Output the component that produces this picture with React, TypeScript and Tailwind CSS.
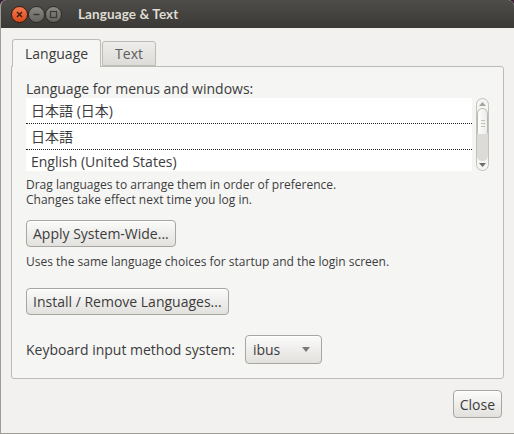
import { useState } from "react";

const font = { fontFamily: '"Open Sans", "Noto Sans CJK JP", sans-serif' };

const langs = ["日本語 (日本)", "日本語", "English (United States)"];

const WinButton = ({ kind }: { kind: "close" | "min" | "max" }) => {
  const isClose = kind === "close";
  return (
    <div
      className={
        "w-[17px] h-[17px] rounded-full flex items-center justify-center border " +
        (isClose
          ? "bg-gradient-to-b from-[#f47a4f] to-[#d84a17] border-[#3a1a10]"
          : "bg-gradient-to-b from-[#8a8883] to-[#66645f] border-[#2e2d2a]")
      }
    >
      <svg width="9" height="9" viewBox="0 0 9 9">
        {kind === "close" && (
          <path d="M2 2 L7 7 M7 2 L2 7" stroke="#3b1a0e" strokeWidth="1.4" />
        )}
        {kind === "min" && <path d="M1.5 4.5 H7.5" stroke="#3a3935" strokeWidth="1.4" />}
        {kind === "max" && (
          <rect x="1.5" y="1.5" width="6" height="6" fill="none" stroke="#3a3935" strokeWidth="1.2" />
        )}
      </svg>
    </div>
  );
};

const GtkButton = ({ children, className = "" }: { children: React.ReactNode; className?: string }) => (
  <div
    className={
      "h-[27px] flex items-center px-[6px] rounded-[4px] border border-[#a8a6a0] bg-gradient-to-b from-[#fbfbfa] to-[#e2e1de] text-[14px] text-[#3c3c3c] shadow-[inset_0_1px_0_#fff] " +
      className
    }
  >
    {children}
  </div>
);

export default function App() {
  const [tab, setTab] = useState("Language");
  return (
    <div
      style={font}
      className="w-[514px] h-[434px] bg-[#3c1d33] overflow-hidden text-[#3c3c3c]"
    >
      <div className="w-full h-full rounded-t-[6px] overflow-hidden flex flex-col bg-[#f2f1f0] border-l border-b border-[#9e9c97]">
        {/* title bar */}
        <div className="h-[28px] shrink-0 flex items-center bg-gradient-to-b from-[#4e4d49] to-[#3a3935] pl-[10px]">
          <div className="flex items-center">
            <WinButton kind="close" />
            <WinButton kind="min" />
            <WinButton kind="max" />
          </div>
          <span className="ml-[16px] font-['Lato',sans-serif] text-[13.5px] font-bold text-[#dfdbd2] tracking-[0.1px]">
            Language &amp; Text
          </span>
        </div>

        <div className="flex-1 flex flex-col px-[10px] pt-[10px]">
          {/* tabs */}
          <div className="flex items-end h-[28px] pl-[1px]">
            {["Language", "Text"].map((t) => {
              const active = t === tab;
              return (
                <div
                  key={t}
                  onClick={() => setTab(t)}
                  className={
                    "border border-[#bdbbb6] rounded-t-[3px] px-[12px] text-[14px] flex items-center cursor-default " +
                    (active
                      ? "h-[28px] bg-[#f6f6f5] border-b-0 relative top-[1px] z-10 text-[#3c3c3c]"
                      : "h-[25px] ml-[1px] bg-gradient-to-b from-[#eeedeb] to-[#dddcd9] text-[#5d5d5d]")
                  }
                >
                  {t}
                </div>
              );
            })}
          </div>

          {/* notebook page */}
          <div className="h-[313px] border border-[#bdbbb6] rounded-b-[3px] rounded-tr-[3px] bg-[#f5f5f4] pl-[14px] pt-[13px] w-[493px]">
            <div className="text-[14px] leading-[17px]">Language for menus and windows:</div>
            <div className="mt-[1px] flex">
              <div className="w-[446px] h-[73px] bg-white overflow-hidden">
                {langs.map((l, i) => (
                  <div
                    key={l}
                    className={
                      "h-[26px] flex items-center pl-[5px] text-[14px] " +
                      (i < 2 ? "border-b border-dotted border-[#222]" : "pb-[3px]")
                    }
                  >
                    {l}
                  </div>
                ))}
              </div>
              <div className="ml-[4px] w-[13px] h-[73px] rounded-full border border-[#c3c1bc] bg-[#f4f4f3] flex flex-col items-center py-[3px]">
                <svg width="7" height="4" viewBox="0 0 7 4">
                  <path d="M0 4 L3.5 0 L7 4 Z" fill="#a6a5a1" />
                </svg>
                <div className="mt-[2px] w-[11px] h-[30px] rounded-full border border-[#b9b7b2] bg-gradient-to-r from-[#fdfdfd] to-[#ececea] flex flex-col items-center justify-center gap-[2px]">
                  <div className="w-[4px] h-[1px] bg-[#c0beb9]" />
                  <div className="w-[4px] h-[1px] bg-[#c0beb9]" />
                  <div className="w-[4px] h-[1px] bg-[#c0beb9]" />
                </div>
                <div className="flex-1 w-[11px] bg-[#dcdbd8] rounded-b-full mt-[-4px]" />
                <svg className="mt-[2px]" width="7" height="4" viewBox="0 0 7 4">
                  <path d="M0 0 L7 0 L3.5 4 Z" fill="#6d6c68" />
                </svg>
              </div>
            </div>
            <div className="mt-[6px] text-[12px] leading-[15px]">
              <div>Drag languages to arrange them in order of preference.</div>
              <div>Changes take effect next time you log in.</div>
            </div>
            <div className="mt-[13px] flex">
              <GtkButton>Apply System-Wide...</GtkButton>
            </div>
            <div className="mt-[7px] text-[12px] leading-[15px]">
              Uses the same language choices for startup and the login screen.
            </div>
            <div className="mt-[19px] flex">
              <GtkButton>Install / Remove Languages...</GtkButton>
            </div>
            <div className="mt-[20px] flex items-center">
              <span className="text-[14px]">Keyboard input method system:</span>
              <div className="ml-[10px] w-[77px] h-[29px] flex items-center justify-between pl-[7px] pr-[11px] rounded-[4px] border border-[#a8a6a0] bg-gradient-to-b from-[#fbfbfa] to-[#e2e1de] text-[14px] shadow-[inset_0_1px_0_#fff]">
                <span>ibus</span>
                <svg width="8" height="5" viewBox="0 0 8 5">
                  <path d="M0 0 L8 0 L4 5 Z" fill="#7a7975" />
                </svg>
              </div>
            </div>
          </div>

          <div className="flex justify-end mt-[11px] pr-[2px]">
            <GtkButton className="h-[28px] px-[4px]">Close</GtkButton>
          </div>
        </div>
      </div>
    </div>
  );
}
